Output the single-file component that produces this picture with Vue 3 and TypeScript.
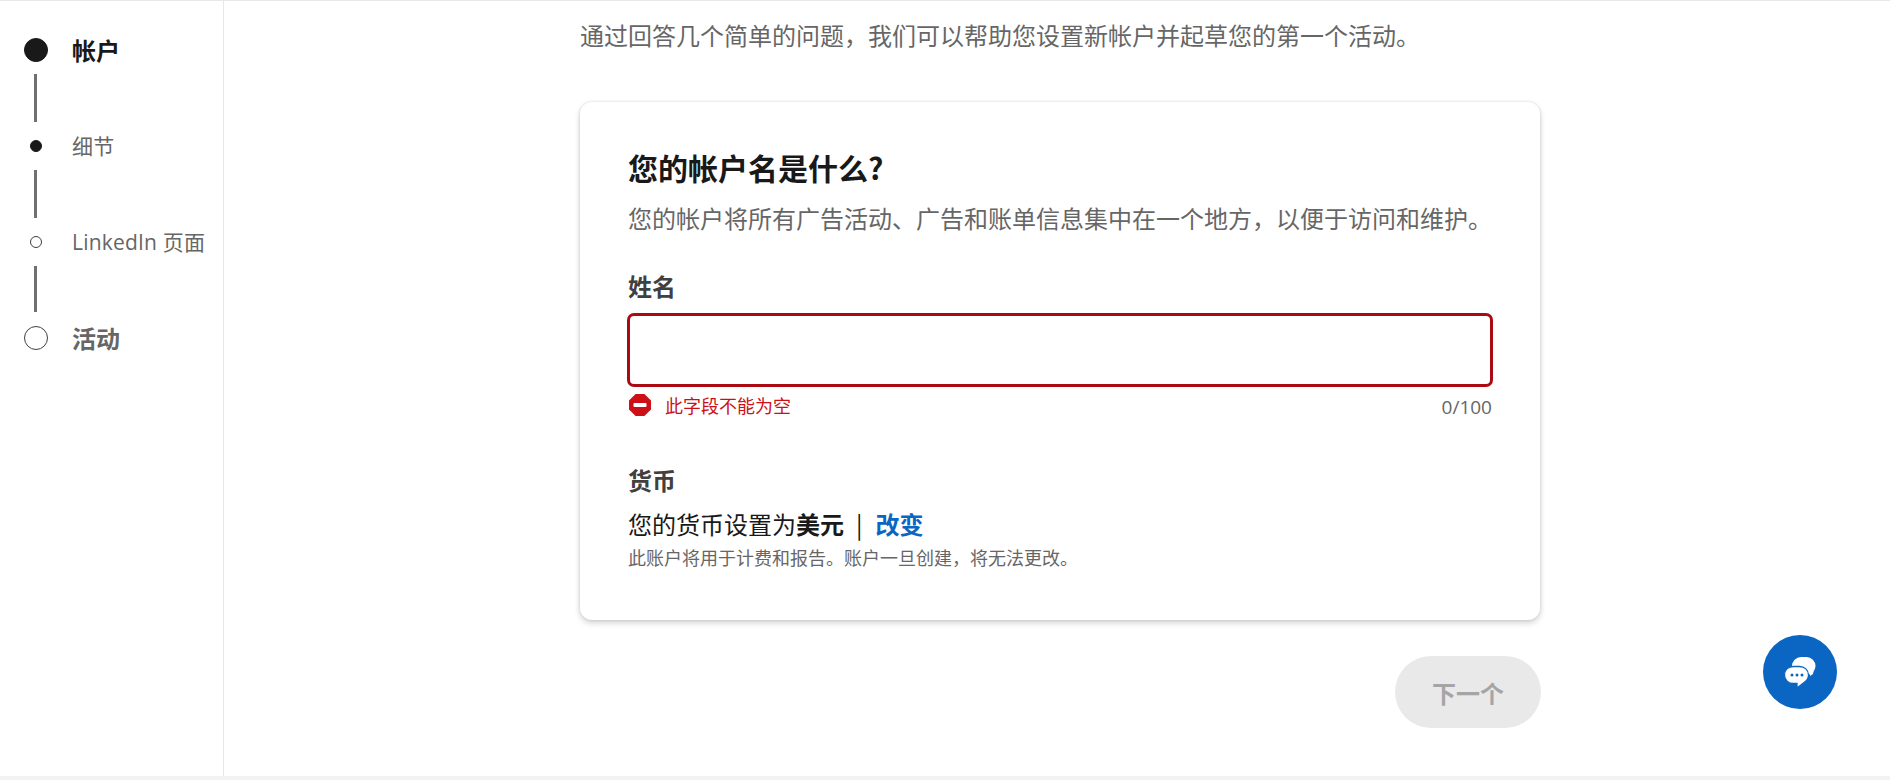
<template>
  <div class="page">
    <aside class="sidebar">
      <template v-for="(step, i) in steps" :key="step.label">
        <div class="step">
          <span class="marker"><span class="dot" :class="[step.size, { filled: step.filled }]"></span></span>
          <span class="step-label" :class="{ major: step.size === 'big', current: i === 0 }">{{ step.label }}</span>
        </div>
        <div v-if="i < steps.length - 1" class="connector" :class="{ short: i === steps.length - 2 }"></div>
      </template>
    </aside>

    <main class="main">
      <div class="column">
        <p class="intro">通过回答几个简单的问题，我们可以帮助您设置新帐户并起草您的第一个活动。</p>

        <section class="card">
          <h1 class="title">您的帐户名是什么?</h1>
          <p class="subtitle">您的帐户将所有广告活动、广告和账单信息集中在一个地方，以便于访问和维护。</p>

          <label class="field-label" for="account-name">姓名</label>
          <input id="account-name" v-model="name" class="name-input" type="text" maxlength="100" />
          <div class="field-meta">
            <span class="error">
              <svg class="error-icon" viewBox="0 0 22 22" width="22" height="22" aria-hidden="true">
                <path d="M6.6 0h8.8L22 6.6v8.8L15.4 22H6.6L0 15.4V6.6z" fill="#cc1016" />
                <rect x="4.5" y="9" width="13" height="4" rx="1" fill="#fff" />
              </svg>
              此字段不能为空
            </span>
            <span class="counter">{{ name.length }}/100</span>
          </div>

          <div class="field-label currency-label">货币</div>
          <p class="currency">
            您的货币设置为<strong>美元</strong><span class="sep">|</span><a class="change" href="#" @click.prevent>改变</a>
          </p>
          <p class="hint">此账户将用于计费和报告。账户一旦创建，将无法更改。</p>
        </section>

        <div class="actions">
          <button class="next" type="button" disabled>下一个</button>
        </div>
      </div>
    </main>

    <button class="chat" type="button" aria-label="chat">
      <svg viewBox="0 0 74 74" width="74" height="74" aria-hidden="true">
        <rect x="29" y="22" width="23.500" height="18" rx="9" fill="#fff" />
        <path d="M47 38l4-4-1 5-3 2z" fill="#fff" />
        <path d="M30.500 31.500h6c5 0 9 3.500 9 8.500 0 3.500-2 6-4.500 7.500L34 53v-4.500h-3.500c-5 0-9-3.500-9-8.500s3.500-8.500 9-8.500z" fill="#fff" stroke="#0a66c2" stroke-width="1.300" />
        <circle cx="29" cy="40" r="1.500" fill="#0a66c2" />
        <circle cx="34" cy="40" r="1.500" fill="#0a66c2" />
        <circle cx="39" cy="40" r="1.500" fill="#0a66c2" />
      </svg>
    </button>
  </div>
</template>

<script setup lang="ts">
import { ref } from 'vue'

interface Step {
  label: string
  size: 'big' | 'small'
  filled: boolean
}

const steps: Step[] = [
  { label: '帐户', size: 'big', filled: true },
  { label: '细节', size: 'small', filled: true },
  { label: 'LinkedIn 页面', size: 'small', filled: false },
  { label: '活动', size: 'big', filled: false },
]

const name = ref('')
</script>

<style>
html,
body {
  margin: 0;
  background: #fff;
}
</style>

<style scoped>
.page {
  display: flex;
  box-sizing: border-box;
  width: 1890px;
  height: 780px;
  overflow: hidden;
  border-top: 1px solid #e8e8e8;
  border-bottom: 4px solid #f3f3f3;
  background: #fff;
  font-family: "Noto Sans CJK SC", "Open Sans", sans-serif;
  color: #191919;
}

.sidebar {
  box-sizing: border-box;
  flex: none;
  width: 224px;
  padding: 25px 0 0 12px;
  border-right: 1px solid #e8e8e8;
}

.step {
  display: flex;
  align-items: center;
  height: 48px;
}

.marker {
  display: flex;
  flex: none;
  align-items: center;
  justify-content: center;
  width: 48px;
  height: 48px;
  margin-right: 12px;
}

.dot {
  box-sizing: border-box;
  border: 1px solid #404040;
  border-radius: 50%;
}

.dot.big {
  width: 24px;
  height: 24px;
}

.dot.small {
  width: 12px;
  height: 12px;
}

.dot.filled {
  border-color: #191919;
  background: #191919;
}

.step-label {
  margin-top: -2px;
  font-family: "Open Sans", "Noto Sans CJK SC", sans-serif;
  font-size: 21px;
  letter-spacing: 0.2px;
  white-space: nowrap;
  color: #666;
}

.step-label.major {
  font-size: 24px;
  font-weight: 700;
  letter-spacing: 0;
}

.step-label.current {
  color: #191919;
}

.connector {
  width: 3px;
  height: 48px;
  margin-left: 22px;
  background: #707070;
}

.connector.short {
  height: 46px;
  margin-bottom: 2px;
}

.main {
  flex: 1;
  padding-left: 356px;
}

.column {
  width: 960px;
}

.intro {
  box-sizing: border-box;
  height: 101px;
  margin: 0;
  padding-top: 16px;
  font-size: 24px;
  line-height: 36px;
  color: #666;
  white-space: nowrap;
}

.card {
  box-sizing: border-box;
  height: 518px;
  padding: 44px 48px 0;
  border-radius: 12px;
  background: #fff;
  box-shadow: 0 0 0 1.500px rgba(0, 0, 0, 0.04), 0 3px 6px rgba(0, 0, 0, 0.18);
}

.title {
  margin: 0;
  font-size: 30px;
  line-height: 42px;
  font-weight: 700;
  color: #191919;
}

.subtitle {
  margin: 12px 0 0;
  font-size: 24px;
  line-height: 36px;
  color: #666;
  white-space: nowrap;
}

.field-label {
  display: block;
  margin-top: 32px;
  font-size: 24px;
  line-height: 36px;
  font-weight: 700;
  color: #404040;
}

.name-input {
  display: block;
  box-sizing: border-box;
  width: calc(100% + 2px);
  height: 74px;
  margin: 9px 0 0 -1px;
  padding: 0 18px;
  border: 3px solid #ab0a12;
  border-radius: 7px;
  outline: none;
  background: #fff;
  font: inherit;
}

.field-meta {
  display: flex;
  align-items: center;
  justify-content: space-between;
  height: 27px;
  margin-top: 4px;
}

.error {
  display: flex;
  align-items: center;
  gap: 14px;
  font-size: 18px;
  color: #cc1016;
}

.error-icon {
  flex: none;
  margin-left: 1px;
}

.counter {
  margin-top: 4px;
  font-family: "Open Sans", "Noto Sans CJK SC", sans-serif;
  font-size: 19px;
  color: #666;
}

.currency-label {
  margin-top: 44px;
}

.currency {
  margin: 8px 0 0;
  font-size: 24px;
  line-height: 36px;
  color: #191919;
}

.currency strong {
  font-weight: 700;
}

.sep {
  margin: 0 13px 0 12px;
}

.change {
  font-weight: 700;
  color: #0a66c2;
  text-decoration: none;
}

.hint {
  margin: 2px 0 0;
  font-size: 18px;
  line-height: 27px;
  color: #666;
}

.actions {
  display: flex;
  justify-content: flex-end;
  margin: 36px -1px 0 0;
}

.next {
  width: 146px;
  height: 72px;
  padding: 0;
  border: none;
  border-radius: 36px;
  background: #e9e9e9;
  font: inherit;
  font-size: 24px;
  font-weight: 700;
  color: #a5a5a5;
}

.chat {
  position: fixed;
  left: 1763px;
  top: 635px;
  width: 74px;
  height: 74px;
  padding: 0;
  border: none;
  border-radius: 50%;
  background: #0a66c2;
}

.chat svg {
  display: block;
}
</style>
